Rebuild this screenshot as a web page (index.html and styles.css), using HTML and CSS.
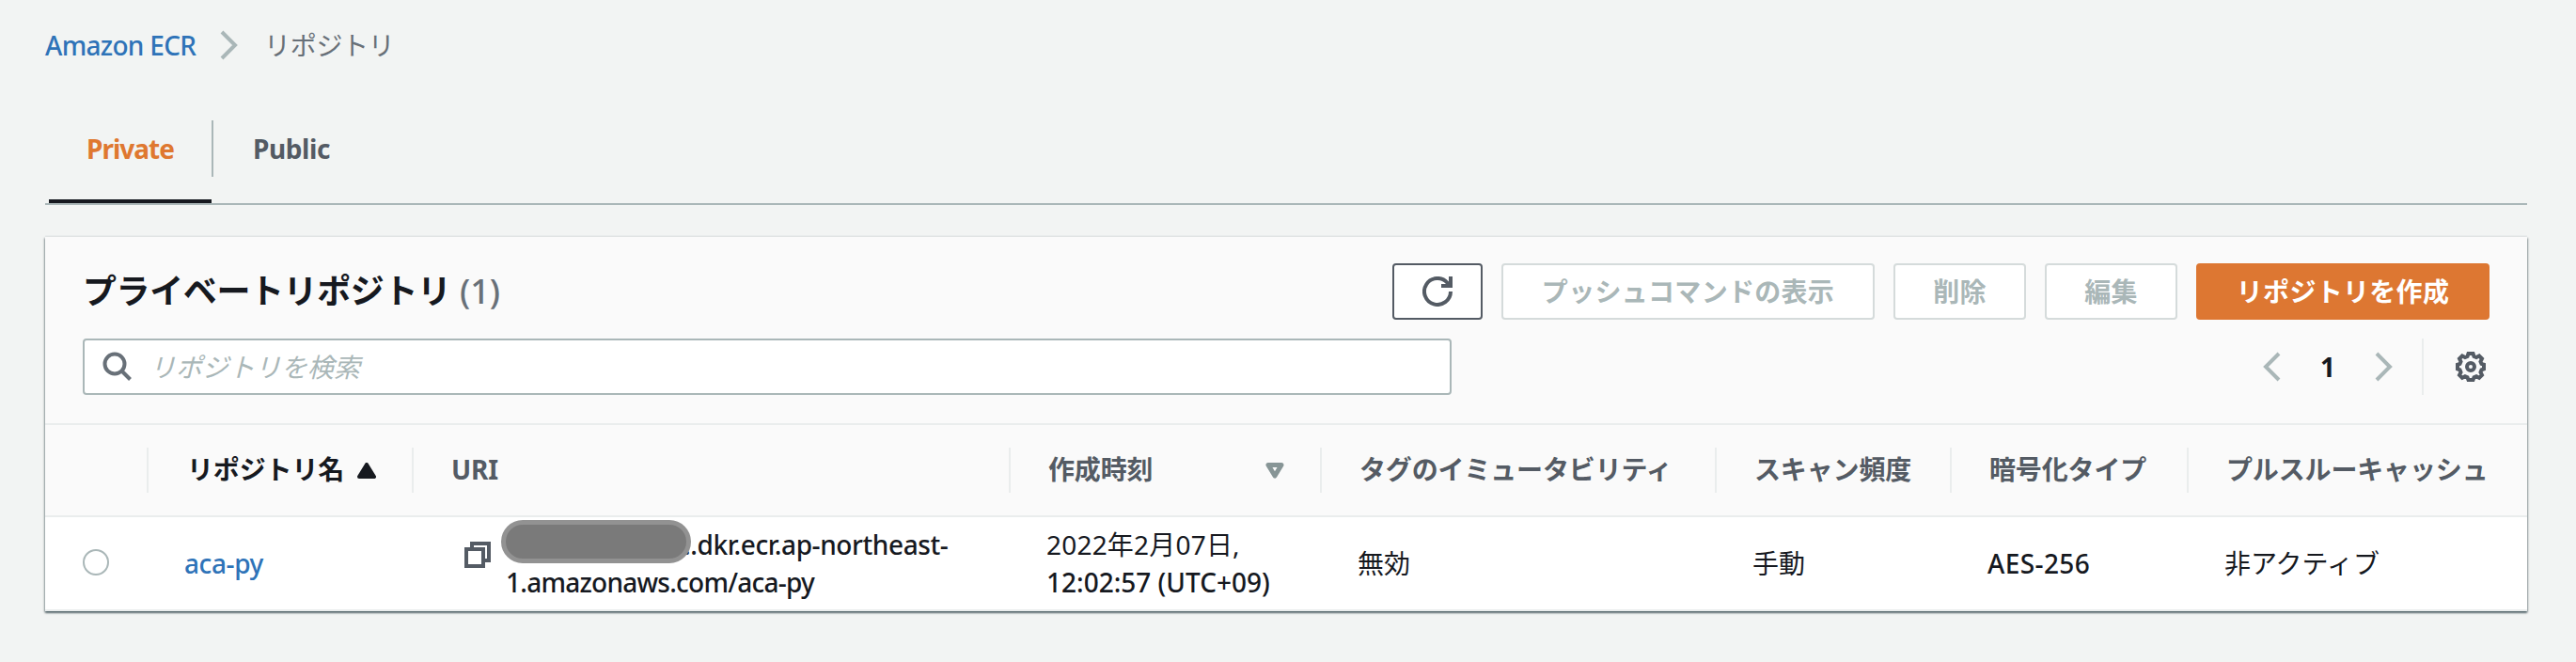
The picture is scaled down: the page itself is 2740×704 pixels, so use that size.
FILE: index.html
```html
<!DOCTYPE html>
<html lang="ja">
  <head>
    <meta charset="UTF-8" />
    <meta name="viewport" content="width=device-width, initial-scale=1.0" />
    <title>Amazon ECR - リポジトリ</title>
    <link rel="stylesheet" href="styles.css">
  </head>
  <body>
    <nav class="breadcrumb">
      <a href="#" class="link crumb-root">Amazon ECR</a>
      <svg class="crumb-arrow" width="20" height="32" viewBox="0 0 20 32"><path d="M2 2l14 14L2 30" /></svg>
      <span class="crumb-current">リポジトリ</span>
    </nav>

    <div class="tabs">
      <a class="tab active"><span class="tab-private">Private</span></a>
      <a class="tab"><span class="tab-public">Public</span></a>
    </div>

    <main class="card">
      <header class="card-header">
        <div class="title-row">
          <div class="title">
            <h1>プライベートリポジトリ</h1>
            <span class="count">(1)</span>
          </div>
          <div class="actions">
            <button class="btn btn-refresh">
              <svg width="32" height="32" viewBox="0 0 32 32"><path d="M30 16A14 14 0 1 1 26.500 6.700L29 10" /><path d="M30 0v10H20" /></svg>
            </button>
            <button class="btn btn-push" disabled>プッシュコマンドの表示</button>
            <button class="btn btn-small" disabled>削除</button>
            <button class="btn btn-small" disabled>編集</button>
            <button class="btn btn-primary">リポジトリを作成</button>
          </div>
        </div>
        <div class="filter-row">
          <div class="search">
            <svg width="32" height="32" viewBox="0 0 32 32"><circle cx="13" cy="13" r="10.500" /><path d="M20.500 20.500l9 9" /></svg>
            <span>リポジトリを検索</span>
          </div>
          <div class="pager">
            <svg class="arrow" width="20" height="32" viewBox="0 0 20 32"><path d="M18 2L4 16l14 14" /></svg>
            <b class="page">1</b>
            <svg class="arrow" width="20" height="32" viewBox="0 0 20 32"><path d="M2 2l14 14L2 30" /></svg>
            <div class="settings">
              <svg width="32" height="32" viewBox="0 0 32 32">
                <path d="M13.500 2h5l1 3 2.500 1 3-1.500 3 3L26.500 10.500l1 2.500 2.500.8v4.500l-2.500 1-1 2.500 1.500 3-3 3-3-1.500-2.500 1-1 2.700h-5l-1-2.700-2.500-1-3 1.500-3-3 1.500-3-1-2.500-2.500-1v-4.500l2.500-.8 1-2.500L4 7.500l3-3L10 6l2.500-1z" />
                <circle cx="16" cy="16" r="4" />
              </svg>
            </div>
          </div>
        </div>
      </header>

      <div class="row head">
        <div class="cell"></div>
        <div class="cell sorted">リポジトリ名 <svg width="20" height="17" viewBox="0 0 20 17"><path d="M10 2L18 15H2z" /></svg></div>
        <div class="cell">URI</div>
        <div class="cell created">作成時刻 <svg width="20" height="17" viewBox="0 0 20 17"><path d="M3 2.500h14L10 14z" /></svg></div>
        <div class="cell">タグのイミュータビリティ</div>
        <div class="cell">スキャン頻度</div>
        <div class="cell">暗号化タイプ</div>
        <div class="cell">プルスルーキャッシュ</div>
      </div>

      <div class="row body">
        <div class="cell"><span class="radio"></span></div>
        <div class="cell name"><a href="#" class="link">aca-py</a></div>
        <div class="cell uri">
          <svg width="30" height="30" viewBox="0 0 30 30"><path d="M3 9h18v18H3z" /><path d="M9 9V3h18v18h-6" /></svg>
          <div class="uri-text">
            <div class="uri-line"><span class="mask"></span><span class="uri-host">..dkr.ecr.ap-northeast-</span></div>
            <div class="uri-path">1.amazonaws.com/aca-py</div>
          </div>
        </div>
        <div class="cell date">
          <div class="date-day">2022年2月07日,</div>
          <div class="date-time">12:02:57 (UTC+09)</div>
        </div>
        <div class="cell">無効</div>
        <div class="cell">手動</div>
        <div class="cell aes">AES-256</div>
        <div class="cell">非アクティブ</div>
      </div>
    </main>
  </body>
</html>
```
FILE: styles.css
```css
* {
  margin: 0;
  padding: 0;
  box-sizing: border-box;
}

body {
  width: 2740px;
  height: 704px;
  padding: 0 52px 0 48px;
  overflow: hidden;
  background-color: #f2f4f3;
  color: #16191f;
  font-family: 'Noto Sans', 'Noto Sans CJK JP', sans-serif;
  font-size: 28px;
  line-height: 40px;
  white-space: nowrap;
}

svg {
  display: block;
  flex: none;
  fill: none;
  stroke: #545b64;
  stroke-width: 4;
}

.link {
  color: #2e73b8;
  text-decoration: none;
}

.breadcrumb {
  display: flex;
  align-items: center;
  height: 96px;
  color: #687078;
}

.crumb-root {
  width: 186px;
  letter-spacing: -0.7px;
  font-weight: 500;
}

.crumb-arrow,
.arrow {
  stroke: #aab7b8;
}

.crumb-current {
  margin-left: 27px;
  letter-spacing: -0.3px;
}

.tabs {
  display: flex;
  height: 122px;
  padding-left: 4px;
  border-bottom: 2px solid #aab7b8;
}

.tab {
  display: flex;
  align-items: center;
  width: 173px;
  height: 120px;
  padding: 8px 0 0 40px;
  font-weight: bold;
  color: #545b64;
}

.tab + .tab {
  height: 60px;
  margin-top: 32px;
  padding: 0 0 0 42px;
  border-left: 2px solid #aab7b8;
}

.tab.active {
  color: #df7830;
  border-bottom: 4px solid #16191f;
}

.tab-private {
  letter-spacing: -1px;
}

.tab-public {
  letter-spacing: -0.4px;
}

.card {
  width: 2640px;
  height: 398px;
  margin-top: 34px;
  background-color: #fff;
  box-shadow: 0 2px 2px rgba(0, 28, 36, 0.5), 1px 1px 2px rgba(0, 28, 36, 0.25), -1px 1px 2px rgba(0, 28, 36, 0.25), 0 -2px 0 #eaeded;
}

.card-header {
  height: 200px;
  padding: 28px 40px 0;
  background-color: #fafafa;
  border-bottom: 2px solid #eaeded;
}

.title-row,
.filter-row {
  display: flex;
  justify-content: space-between;
  height: 60px;
}

.filter-row {
  margin-top: 20px;
}

.title {
  display: flex;
  font-size: 36px;
  line-height: 60px;
}

h1 {
  width: 401px;
  font-size: 36px;
  letter-spacing: -0.4px;
}

.count {
  color: #687078;
  font-weight: 500;
}

.actions {
  display: flex;
  gap: 20px;
}

.btn {
  display: flex;
  align-items: center;
  justify-content: center;
  height: 60px;
  padding-bottom: 2px;
  background-color: #fff;
  border: 2px solid #545b64;
  border-radius: 4px;
  font: bold 28px 'Noto Sans', 'Noto Sans CJK JP', sans-serif;
  letter-spacing: 0.3px;
}

.btn:disabled {
  color: #aab7b8;
  border-color: #d5dbdb;
}

.btn-refresh {
  width: 96px;
  padding-bottom: 0;
}

.btn-push {
  width: 397px;
}

.btn-small {
  width: 141px;
}

.btn-primary {
  width: 312px;
  background-color: #dd7732;
  border-color: #dd7732;
  color: #fff;
}

.search {
  display: flex;
  align-items: center;
  gap: 18px;
  width: 1456px;
  height: 60px;
  padding-left: 19px;
  background-color: #fff;
  border: 2px solid #aab7b8;
  border-radius: 4px;
  color: #aab7b8;
  font-style: italic;
}

.search svg {
  stroke: #687078;
}

.pager {
  display: flex;
  align-items: center;
}

.page {
  width: 100px;
  text-align: center;
}

.settings {
  display: flex;
  align-items: center;
  justify-content: flex-end;
  width: 72px;
  height: 60px;
  margin-left: 30px;
  padding-right: 4px;
  border-left: 2px solid #eaeded;
}

.row {
  display: grid;
  grid-template-columns: 108px 282px 635px 331px 420px 250px 252px 362px;
}

.head {
  height: 98px;
  padding-top: 24px;
  background-color: #fafafa;
  border-bottom: 2px solid #eaeded;
  color: #545b64;
  font-weight: bold;
  letter-spacing: -0.15px;
}

.head .cell {
  display: flex;
  align-items: center;
  height: 48px;
  padding: 0 0 2px 40px;
  border-left: 2px solid #eaeded;
}

.head .cell:first-child {
  border: none;
}

.head .sorted {
  padding-left: 41px;
  color: #16191f;
}

.sorted svg {
  margin: 2px 0 0 14px;
  fill: #16191f;
  stroke: #16191f;
  stroke-linejoin: round;
}

.created svg {
  margin: 2px 38px 0 auto;
  stroke: #879596;
  stroke-width: 5;
  stroke-linejoin: round;
}

.body {
  height: 100px;
  border-bottom: 2px solid #eaeded;
}

.body .cell {
  display: flex;
  align-items: center;
  padding-left: 40px;
}

.radio {
  width: 28px;
  height: 28px;
  margin-bottom: 2px;
  border: 2px solid #aab7b8;
  border-radius: 50%;
}

.name,
.aes,
.uri,
.date-time {
  font-weight: 500;
}

.name {
  letter-spacing: -0.4px;
}

.body .uri {
  padding-left: 55px;
}

.uri svg {
  margin-bottom: 18px;
}

.uri-text {
  padding-left: 10px;
}

.uri-line {
  display: flex;
}

/* covers the account id and the dot next to it */
.mask {
  z-index: 1;
  width: 202px;
  height: 46px;
  margin: -6px -8px 0 0;
  background-color: #7a7a7a;
  border: 5px solid #929292;
  border-radius: 23px;
}

.uri-host {
  letter-spacing: -0.4px;
}

.uri-path {
  margin-left: 5px;
  letter-spacing: -0.75px;
}

.body .date {
  flex-direction: column;
  align-items: flex-start;
  justify-content: center;
}

.date-day {
  letter-spacing: 0.2px;
}

.aes {
  letter-spacing: 0.4px;
}
```
